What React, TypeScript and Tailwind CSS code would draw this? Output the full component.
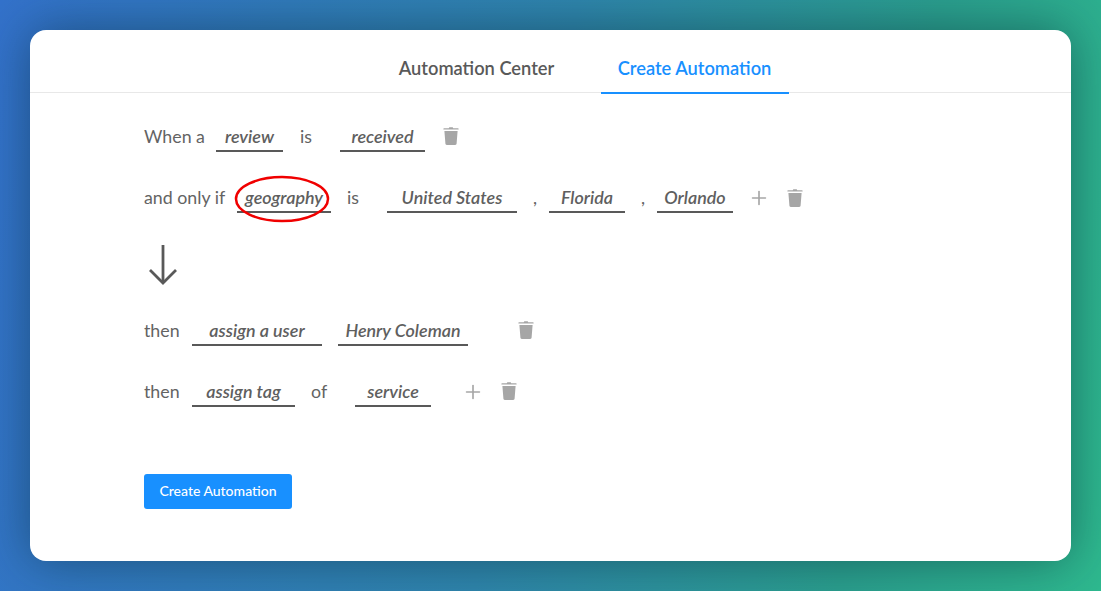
import { Plus } from 'lucide-react';

function Trash({ className = '' }: { className?: string }) {
  return (
    <svg viewBox="0 0 16 18" className={`w-4 h-[18px] text-[#a6a6a6] ${className}`} fill="currentColor">
      <path d="M5.8 1.2 6.3.3h3.4l.5.9H15c.4 0 .6.3.6.6v.7H.4v-.7c0-.3.2-.6.6-.6h4.8z" />
      <path d="M1.4 4h13.2l-1 12.6c0 .8-.6 1.4-1.4 1.4H3.8c-.8 0-1.4-.6-1.4-1.4L1.4 4z" />
    </svg>
  );
}

function Field({ text, width, className = '', circled = false }: { text: string; width: string; className?: string; circled?: boolean }) {
  return (
    <div className={`relative h-[30px] border-b-2 border-[#595959] text-center text-[17.9px] leading-[28px] italic font-semibold text-[#5f5f5f] ${width} ${className}`}>
      {text}
      {circled && (
        <svg viewBox="0 0 94 46" className="absolute left-[-2px] top-[-7px] w-[94px] h-[46px] overflow-visible" fill="none">
          <ellipse cx="47" cy="23" rx="46" ry="22" stroke="#f00000" strokeWidth="2.5" />
        </svg>
      )}
    </div>
  );
}

function Label({ text, width, className = '' }: { text: string; width: string; className?: string }) {
  return <span className={`text-[17.8px] leading-[29px] text-[#636363] h-[30px] whitespace-nowrap ${width} ${className}`}>{text}</span>;
}

export default function App() {
  return (
    <div className="h-[591px] w-[1101px] overflow-hidden p-[30px] font-['Lato',sans-serif] bg-[linear-gradient(100deg,#3372cb_0%,#2f86ad_48%,#2ba08f_78%,#2eb98f_100%)]">
      <div className="h-[531px] w-[1041px] rounded-[16px] bg-white shadow-[0_0_50px_rgba(0,30,40,0.45)]">
        <div className="flex h-[63px] justify-center border-b border-[#e8e8e8] pl-[62px]">
          <div className="flex h-[63px] w-[204px] justify-center mr-[22px] pt-[23px] text-[18.3px] leading-[30px] font-semibold text-[#595959]">Automation Center</div>
          <div className="flex h-[64px] w-[188px] justify-center border-b-2 border-[#1890ff] pt-[23px] text-[18.3px] leading-[30px] font-semibold text-[#1890ff]">Create Automation</div>
        </div>

        <div className="pl-[114px]">
          <div className="flex items-start pt-[29px]">
            <Label text="When a" width="w-[60px]" />
            <Field text="review" width="w-[67px]" className="ml-[12px]" />
            <Label text="is" width="w-[12px]" className="ml-[17px]" />
            <Field text="received" width="w-[85px]" className="ml-[28px]" />
            <Trash className="ml-[18px] mt-[5px]" />
          </div>

          <div className="flex items-start pt-[31px]">
            <Label text="and only if" width="w-[81px]" />
            <Field text="geography" width="w-[94px]" className="ml-[12px]" circled />
            <Label text="is" width="w-[12px]" className="ml-[16px]" />
            <Field text="United States" width="w-[130px]" className="ml-[28px]" />
            <Label text="," width="w-[16px]" className="ml-[16px]" />
            <Field text="Florida" width="w-[76px]" />
            <Label text="," width="w-[16px]" className="ml-[16px]" />
            <Field text="Orlando" width="w-[76px]" />
            <Plus className="ml-[15px] mt-[4px] text-[#a6a6a6]" size={22} strokeWidth={1.8} />
            <Trash className="ml-[17px] mt-[6px]" />
          </div>

          <svg viewBox="0 0 30 40" className="ml-[4px] mt-[32px] w-[30px] h-[40px] text-[#595959]" fill="none" stroke="currentColor" strokeWidth="2.8">
            <path d="M15 0v38" />
            <path d="M2 25l13 13 13-13" />
          </svg>

          <div className="flex items-start pt-[31px]">
            <Label text="then" width="w-[36px]" />
            <Field text="assign a user" width="w-[130px]" className="ml-[12px]" />
            <Field text="Henry Coleman" width="w-[130px]" className="ml-[16px]" />
            <Trash className="ml-[50px] mt-[5px]" />
          </div>

          <div className="flex items-start pt-[31px]">
            <Label text="then" width="w-[36px]" />
            <Field text="assign tag" width="w-[103px]" className="ml-[12px]" />
            <Label text="of" width="w-[16px]" className="ml-[16px]" />
            <Field text="service" width="w-[76px]" className="ml-[28px]" />
            <Plus className="ml-[31px] mt-[4px] text-[#a6a6a6]" size={22} strokeWidth={1.8} />
            <Trash className="ml-[17px] mt-[5px]" />
          </div>

          <button className="mt-[67px] flex h-[35px] w-[148px] items-center justify-center rounded-[3px] bg-[#1890ff] pb-[2px] text-[14px] font-medium text-white">
            Create Automation
          </button>
        </div>
      </div>
    </div>
  );
}
